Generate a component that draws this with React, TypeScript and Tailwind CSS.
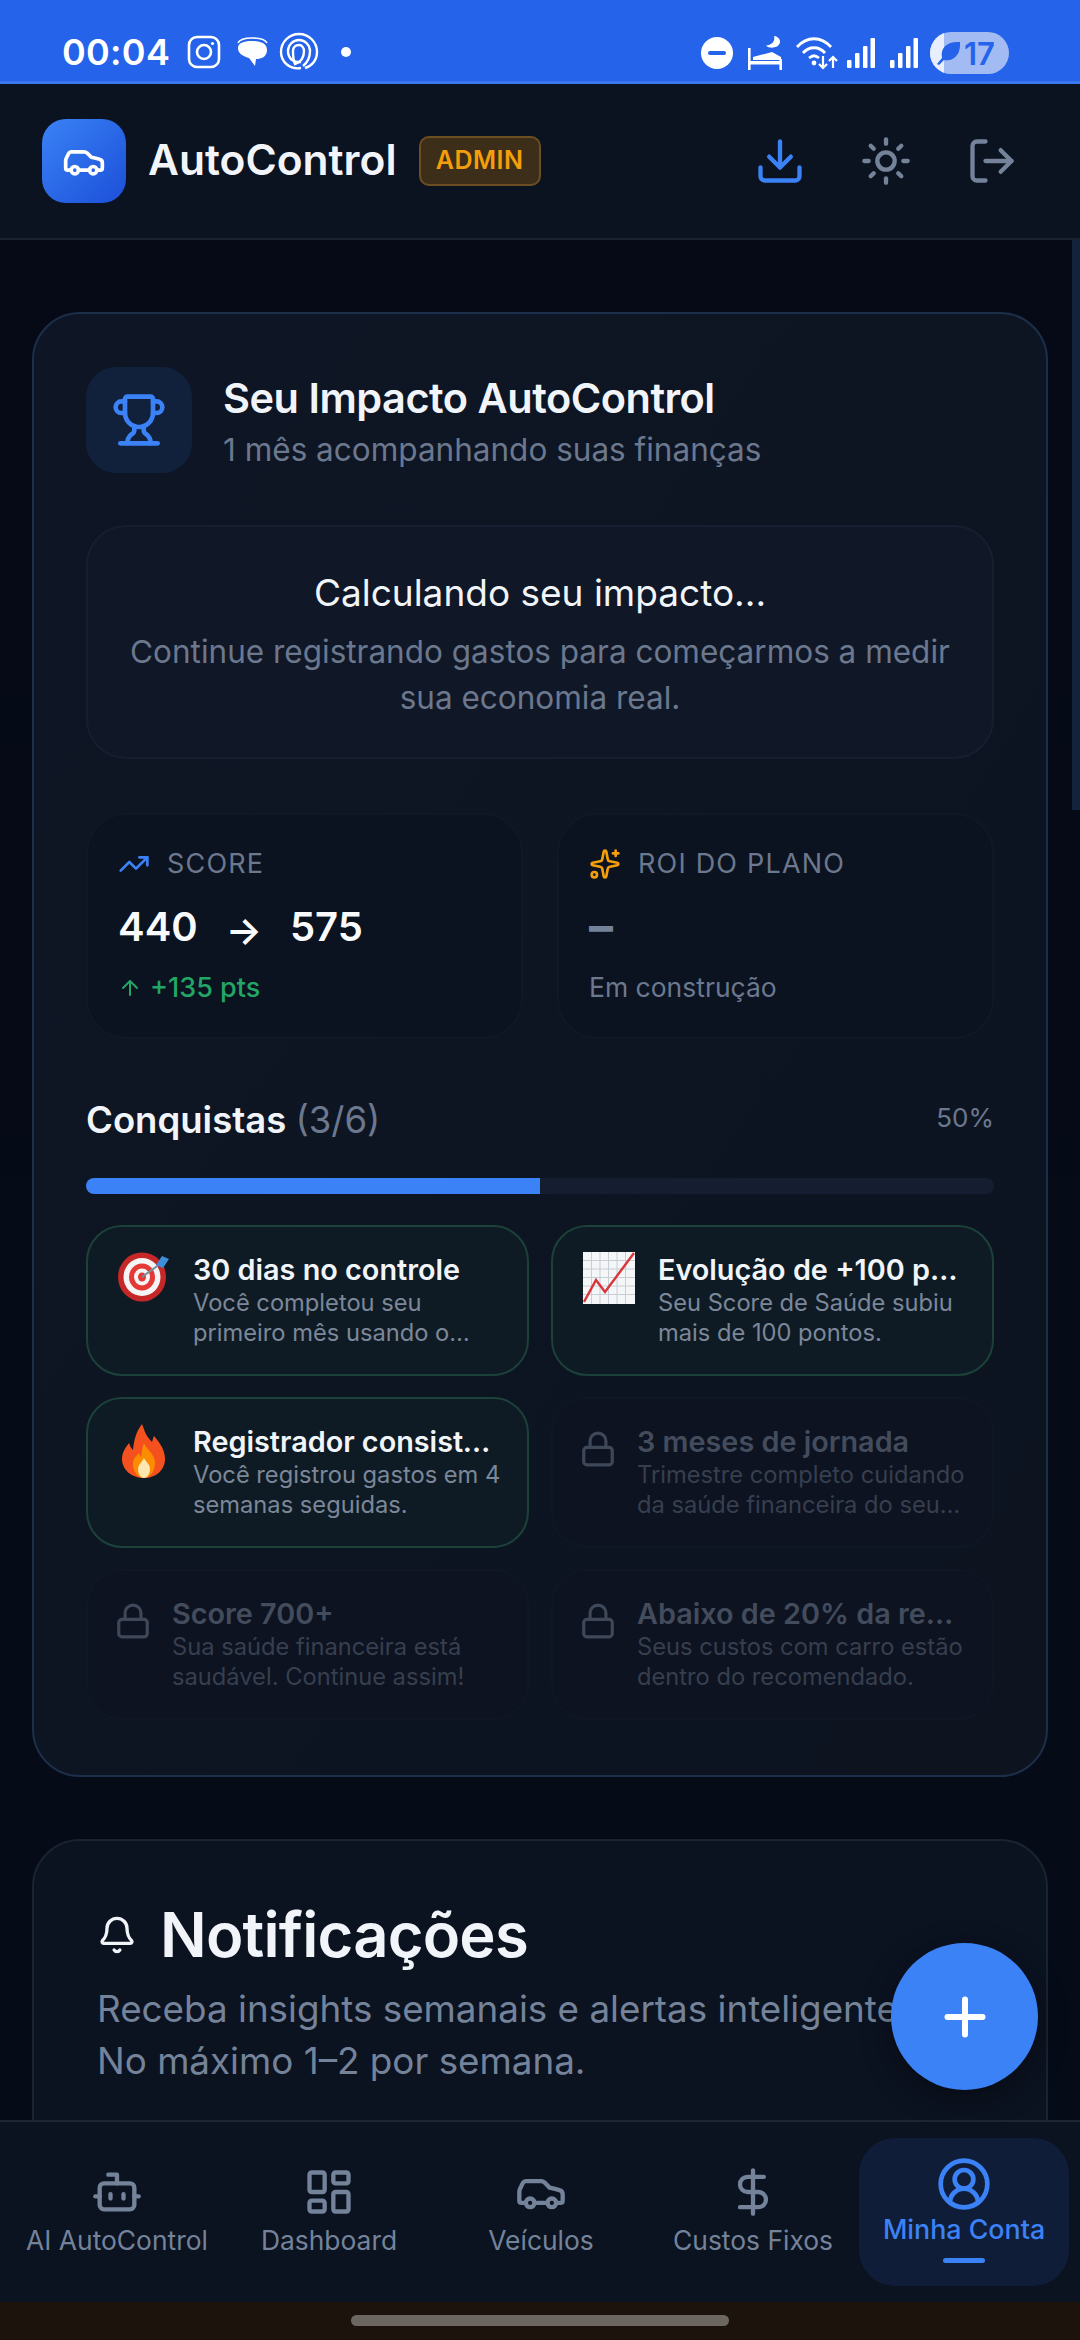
import React from "react";
import { Car, Download, Sun, LogOut, Trophy, TrendingUp, Sparkles, ArrowUp, Lock, Bell, Plus, Bot, LayoutDashboard, DollarSign, CircleUserRound } from "lucide-react";

function StatusLeft() {
  return (
    <div className="flex items-center">
      <span className="text-[36px] font-semibold leading-none text-white tracking-[0.3px]">00:04</span>
      <svg width="34" height="34" viewBox="0 0 34 34" className="ml-[17px]" fill="none" stroke="white" strokeWidth="2.6"><rect x="2" y="2" width="30" height="30" rx="8" /><circle cx="17" cy="17" r="7" /><circle cx="25.5" cy="8.5" r="1.6" fill="white" stroke="none" /></svg>
      <svg width="34" height="34" viewBox="0 0 34 34" className="ml-[15px]"><path d="M2 8c2-4 8-5 14-5s13 1 15 5" fill="none" stroke="white" strokeWidth="1.6" /><path d="M15 6c9 0 16 2 16 9s-6 9-11 9l-1 7-6-8C6 21 2 18 2 13 2 8 8 6 15 6z" fill="white" /></svg>
      <svg width="40" height="40" viewBox="0 0 40 40" className="ml-[9px]" fill="none" stroke="white" strokeWidth="2.4"><path d="M22 36C11 38 2 30 2 20 2 10 10 2 20 2s18 8 18 18c0 8-5 14-12 16" /><path d="M22 30c-8 1-13-4-13-11 0-6 5-11 11-11s11 5 11 11c0 6-2 11-7 15" /><path d="M16 32c-2-4-2-8-2-13 0-4 3-6 6-6s5 3 5 6c0 6-3 11-9 13z" /></svg>
      <span className="ml-[22px] h-[10px] w-[10px] rounded-full bg-white" />
    </div>
  );
}

function StatusRight() {
  return (
    <div className="flex items-center">
      <svg width="32" height="32" viewBox="0 0 32 32"><circle cx="16" cy="16" r="16" fill="white" /><rect x="7" y="14" width="18" height="4" rx="2" fill="#2563eb" /></svg>
      <svg width="36" height="34" viewBox="0 0 36 34" className="ml-[14px]" fill="white"><path d="M1 12h2.6v22H1zM32.4 23H35v11h-2.6z" /><path d="M1 25h34v3.4H1z" /><path d="M6 24v-3l19-5 9 5v3z" /><path d="M27 0c1.5 5-2 9-8 9.5 3 3.5 12.500 3 14-3 .5-3-2-6-6-6.500z" /></svg>
      <svg width="42" height="34" viewBox="0 0 42 34" className="ml-[13px]" fill="none" stroke="white" strokeWidth="2.8"><path d="M1 11C11 0 25 0 35 11" /><path d="M7 17c6-7 16-7 22 0" /><path d="M13 22c4-3 6-3 10 0" /><circle cx="18" cy="27" r="2.4" fill="white" stroke="none" /><path d="M27 20v12M23 28l4 4 4-4M37 32V21M33 25l4-4 4 4" strokeWidth="2.2" /></svg>
      <svg width="28" height="30" viewBox="0 0 28 30" className="ml-[9px]" fill="white"><rect x="0" y="22" width="4.500" height="8" rx="1" /><rect x="8" y="15" width="4.500" height="15" rx="1" /><rect x="16" y="8" width="4.500" height="22" rx="1" /><rect x="23.500" y="0" width="4.500" height="30" rx="1" /></svg>
      <svg width="28" height="30" viewBox="0 0 28 30" className="ml-[15px]" fill="white"><rect x="0" y="22" width="4.500" height="8" rx="1" /><rect x="8" y="15" width="4.500" height="15" rx="1" /><rect x="16" y="8" width="4.500" height="22" rx="1" /><rect x="23.500" y="0" width="4.500" height="30" rx="1" /></svg>
      <div className="relative ml-[12px] flex h-[42px] w-[79px] items-center overflow-hidden rounded-full bg-[#a2bbf3]">
        <div className="h-full w-[14px] shrink-0 bg-[#e8eefc]" />
        <svg width="26" height="26" viewBox="0 0 26 26" className="ml-[-8px] shrink-0" fill="#2563eb"><path d="M24 2C12 1 4 7 6 18L1 24l2 1 5-5c11 2 17-7 16-18z" /></svg>
        <span className="ml-[2px] text-[31px] font-semibold leading-none text-[#2563eb]">17</span>
      </div>
    </div>
  );
}

function TargetEmoji() {
  return (
    <svg width="52" height="50" viewBox="0 0 52 50" className="shrink-0">
      <ellipse cx="24" cy="25" rx="24" ry="24.5" fill="#c62828" />
      <ellipse cx="24" cy="25" rx="18.5" ry="19" fill="#f5f5f5" />
      <ellipse cx="24" cy="25" rx="13" ry="13.5" fill="#e53935" />
      <ellipse cx="24" cy="25" rx="8" ry="8.5" fill="#f5f5f5" />
      <ellipse cx="24" cy="25" rx="4" ry="4.5" fill="#e53935" />
      <path d="M24 25L42 12" stroke="#78909c" strokeWidth="2" />
      <path d="M38 13l6-9 7 3-6 9z" fill="#3f8fd8" />
    </svg>
  );
}

function ChartEmoji() {
  return (
    <svg width="52" height="52" viewBox="0 0 52 52" className="shrink-0">
      <rect width="52" height="52" fill="#f4f6f8" />
      <path d="M0 8.500h52M0 17h52M0 25.500h52M0 34h52M0 42.500h52M8.500 0v52M17 0v52M25.500 0v52M34 0v52M42.500 0v52" stroke="#c7ced6" strokeWidth="1" />
      <path d="M1 50l12-22 9 12L51 1" fill="none" stroke="#d9363a" strokeWidth="2.4" />
    </svg>
  );
}

function FireEmoji() {
  return (
    <svg width="52" height="54" viewBox="3 0 46 54" className="shrink-0">
      <path d="M24 0c3 8 4 12 10 18 1-3 1-4 2-6 7 8 11 15 11 23 0 11-9 19-21 19S4 46 4 35c0-6 3-11 7-16 1 3 2 5 4 7 1-10 3-18 9-26z" fill="#f4511e" />
      <path d="M26 19c2 6 11 11 11 20 0 8-5 15-11 15s-11-6-11-14c0-5 3-8 6-11 1 2 1 3 2 4 1-5 1-9 3-14z" fill="#fb8c00" />
      <path d="M26 34c2 4 6 6 6 11 0 5-3 9-6 9s-6-4-6-9c0-4 4-7 6-11z" fill="#ffe8b0" />
    </svg>
  );
}

function Achievement({ emoji, title, desc }: { emoji: React.ReactNode; title: string; desc: string }) {
  return (
    <div className="flex h-[151px] min-w-0 gap-[23px] rounded-[36px] border-2 border-[#1b4139] bg-[#0e1b24] pl-[30px] pr-[26px] pt-[25px]">
      {emoji}
      <div className="min-w-0 flex-1">
        <div className="truncate text-[28.8px] font-semibold leading-[36px] text-[#f1f5f9]">{title}</div>
        <div className="line-clamp-2 text-[23.7px] leading-[30px] text-[#7c8799]">{desc}</div>
      </div>
    </div>
  );
}

function Locked({ title, desc }: { title: string; desc: string }) {
  return (
    <div className="flex h-[151px] min-w-0 gap-[20px] rounded-[36px] border-2 border-[#0f1624] bg-[#0d1320] pl-[26px] pr-[26px] pt-[25px]">
      <Lock size={38} strokeWidth={2} className="mt-[6px] shrink-0 text-[#3f4859]" />
      <div className="min-w-0 flex-1">
        <div className="truncate text-[28.8px] font-semibold leading-[36px] text-[#434c5d]">{title}</div>
        <div className="line-clamp-2 text-[23.7px] leading-[30px] text-[#373f4f]">{desc}</div>
      </div>
    </div>
  );
}

function NavItem({ icon, label }: { icon: React.ReactNode; label: string }) {
  return (
    <div className="flex w-[212px] flex-col items-center">
      {icon}
      <span className="mt-[4px] whitespace-nowrap text-[26.4px] leading-[36px] text-[#74839a]">{label}</span>
    </div>
  );
}

export default function App() {
  return (
    <div className="relative flex h-[2340px] w-[1080px] flex-col overflow-hidden bg-[#050a16] font-['Inter',sans-serif]">
      <div className="flex h-[84px] shrink-0 items-start justify-between border-b-[3px] border-[#3b78f0] bg-[#2563eb] pl-[62px] pr-[71px] pt-[32px]">
        <StatusLeft />
        <StatusRight />
      </div>

      <header className="flex h-[156px] shrink-0 items-center border-b-2 border-[#1a2230] bg-[#0b1220] pl-[42px] pr-[62px]">
        <div className="flex h-[84px] w-[84px] items-center justify-center rounded-[24px] bg-gradient-to-br from-[#3b82f6] to-[#1d4ed8]">
          <Car size={44} strokeWidth={2} className="text-white" />
        </div>
        <span className="mb-[2px] ml-[22px] text-[42.5px] font-semibold leading-none text-[#f1f5f9]">AutoControl</span>
        <span className="ml-[22px] flex h-[50px] w-[122px] items-center justify-center rounded-[10px] border-2 border-[#6b4e22] bg-[#3d2e1a] text-[25px] font-semibold tracking-[0.5px] text-[#f59e0b]">ADMIN</span>
        <div className="ml-auto flex items-center gap-[54px]">
          <Download size={52} strokeWidth={2} className="text-[#3b82f6]" />
          <Sun size={52} strokeWidth={2} className="text-[#74839a]" />
          <LogOut size={52} strokeWidth={2} className="text-[#74839a]" />
        </div>
      </header>

      <main className="flex min-h-0 flex-1 flex-col gap-[62px] overflow-hidden bg-gradient-to-b from-[#050a16] to-[#060b18] px-[32px] pt-[72px]">
        <section className="flex h-[1465px] shrink-0 flex-col rounded-[48px] border-2 border-[#1c2f4a] bg-gradient-to-br from-[#0e1524] to-[#0d1420] px-[52px] pt-[53px]">
          <div className="flex h-[106px] items-start gap-[31px]">
            <div className="flex h-[106px] w-[106px] shrink-0 items-center justify-center rounded-[30px] bg-[#11213c]">
              <Trophy size={56} strokeWidth={2} className="text-[#3b82f6]" />
            </div>
            <div className="pt-[5px]">
              <div className="text-[41.5px] font-semibold leading-[52px] tracking-[-0.5px] text-[#f1f5f9]">Seu Impacto AutoControl</div>
              <div className="text-[31.5px] leading-[52px] text-[#6b788e]">1 mês acompanhando suas finanças</div>
            </div>
          </div>

          <div className="mt-[52px] flex h-[234px] flex-col items-center rounded-[40px] border-2 border-[#161f30] bg-[#101726] px-[30px] pt-[42px] text-center">
            <div className="text-[37px] leading-[48px] text-[#f1f5f9]">Calculando seu impacto...</div>
            <div className="mt-[12px] text-[31.5px] leading-[46px] text-[#6b788e]">Continue registrando gastos para começarmos a medir sua economia real.</div>
          </div>

          <div className="mt-[54px] grid grid-cols-2 gap-[34px]">
            <div className="h-[226px] rounded-[40px] border-2 border-[#101826] bg-[#0b1220] pl-[30px] pt-[30px]">
              <div className="flex items-center gap-[17px] text-[27px] leading-[38px] tracking-[1.2px] text-[#6b788e]">
                <TrendingUp size={32} strokeWidth={2} className="text-[#3b82f6]" />SCORE
              </div>
              <div className="mt-[20px] flex items-center text-[40px] font-semibold leading-[48px] text-[#f8fafc]">
                <span>440</span>
                <span className="mx-[28px] mt-[6px] text-[38px] leading-none">→</span>
                <span>575</span>
              </div>
              <div className="mt-[18px] flex items-center gap-[8px] text-[27px] font-medium leading-[38px] text-[#22a565]">
                <ArrowUp size={24} strokeWidth={2} />+135 pts
              </div>
            </div>
            <div className="h-[226px] rounded-[40px] border-2 border-[#101826] bg-[#0b1220] pl-[30px] pt-[30px]">
              <div className="flex items-center gap-[17px] text-[27px] leading-[38px] tracking-[1.2px] text-[#6b788e]">
                <Sparkles size={32} strokeWidth={2} className="text-[#f59e0b]" />ROI DO PLANO
              </div>
              <div className="mt-[19px] text-[48px] font-bold leading-[48px] text-[#74839a]">–</div>
              <div className="mt-[18px] text-[26.5px] leading-[38px] text-[#6b788e]">Em construção</div>
            </div>
          </div>

          <div className="mt-[57px] flex items-center justify-between">
            <div className="text-[36.5px] font-semibold leading-[48px] text-[#f1f5f9]">Conquistas <span className="font-normal text-[#6b788e]">(3/6)</span></div>
            <div className="mb-[4px] text-[26px] leading-[36px] text-[#6b788e]">50%</div>
          </div>
          <div className="mt-[34px] h-[16px] overflow-hidden rounded-full bg-[#151e30]">
            <div className="h-full w-1/2 bg-[#3b82f6]" />
          </div>

          <div className="mt-[31px] grid grid-cols-2 gap-x-[22px] gap-y-[21px]">
            <Achievement emoji={<TargetEmoji />} title="30 dias no controle" desc="Você completou seu primeiro mês usando o AutoControl." />
            <Achievement emoji={<ChartEmoji />} title="Evolução de +100 pontos" desc="Seu Score de Saúde subiu mais de 100 pontos." />
            <Achievement emoji={<FireEmoji />} title="Registrador consistente" desc="Você registrou gastos em 4 semanas seguidas." />
            <Locked title="3 meses de jornada" desc="Trimestre completo cuidando da saúde financeira do seu carro." />
            <Locked title="Score 700+" desc="Sua saúde financeira está saudável. Continue assim!" />
            <Locked title="Abaixo de 20% da renda mensal" desc="Seus custos com carro estão dentro do recomendado." />
          </div>
        </section>

        <section className="shrink-0 rounded-t-[48px] border-2 border-[#1a2332] bg-[#0b1220] px-[63px] pb-[100px] pt-[58px]">
          <div className="flex items-center gap-[23px]">
            <Bell size={40} strokeWidth={2} className="text-[#f1f5f9]" />
            <span className="text-[61.5px] font-semibold leading-[72px] tracking-[-0.8px] text-[#f1f5f9]">Notificações</span>
          </div>
          <div className="mt-[12px] whitespace-nowrap text-[36.8px] leading-[52px] text-[#74839a]">Receba insights semanais e alertas inteligentes.<br />No máximo 1–2 por semana.</div>
        </section>
      </main>

      <nav className="flex h-[182px] shrink-0 items-center border-t-2 border-[#1e2635] bg-[#0b1220] pl-[11px]">
        <NavItem icon={<Bot size={52} strokeWidth={2} className="text-[#74839a]" />} label="AI AutoControl" />
        <NavItem icon={<LayoutDashboard size={52} strokeWidth={2} className="text-[#74839a]" />} label="Dashboard" />
        <NavItem icon={<Car size={52} strokeWidth={2} className="text-[#74839a]" />} label="Veículos" />
        <NavItem icon={<DollarSign size={52} strokeWidth={2} className="text-[#74839a]" />} label="Custos Fixos" />
        <div className="flex h-[148px] w-[210px] flex-col items-center rounded-[36px] bg-[#101d38] pt-[18px]">
          <CircleUserRound size={56} strokeWidth={2} className="text-[#3b82f6]" />
          <span className="mt-[-1px] whitespace-nowrap text-[26.8px] font-medium leading-[36px] text-[#3b82f6]">Minha Conta</span>
          <span className="mt-[11px] h-[5px] w-[42px] rounded-full bg-[#3b82f6]" />
        </div>
      </nav>

      <div className="flex h-[38px] shrink-0 items-start justify-center bg-[#1c140c] pt-[13px]">
        <div className="h-[11px] w-[378px] rounded-full bg-[#6b6760]" />
      </div>

      <div className="absolute left-[1072px] top-[240px] h-[570px] w-[8px] bg-[#14233c]" />
      <div className="absolute left-[891px] top-[1943px] flex h-[147px] w-[147px] items-center justify-center rounded-full bg-[#3b82f6] shadow-[0_8px_30px_rgba(0,0,0,0.35)]">
        <Plus size={60} strokeWidth={2.4} className="text-white" />
      </div>
    </div>
  );
}
